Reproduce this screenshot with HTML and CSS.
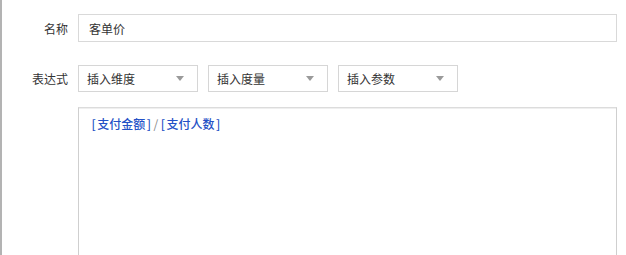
FILE: index.html
```html
<!DOCTYPE html>
<html lang="zh">
<head>
<meta charset="utf-8">
<link rel="stylesheet" href="styles.css">
</head>
<body>
<div class="page">
  <div class="row">
    <div class="label">名称</div>
    <div class="input">客单价</div>
  </div>
  <div class="row row-expr">
    <div class="label">表达式</div>
    <div class="selects">
      <div class="select"><span>插入维度</span><i class="caret"></i></div>
      <div class="select"><span>插入度量</span><i class="caret"></i></div>
      <div class="select"><span>插入参数</span><i class="caret"></i></div>
    </div>
  </div>
  <div class="row row-area">
    <div class="label"></div>
    <div class="area"><span class="tk"><span class="br">[</span>支付金额<span class="br">]</span></span><span class="op">/</span><span class="tk"><span class="br">[</span>支付人数<span class="br">]</span></span></div>
  </div>
</div>
</body>
</html>
```

FILE: styles.css
```css
html, body {
  margin: 0;
  padding: 0;
  background: #fff;
}
body {
  font-family: "Noto Sans CJK SC", "Noto Sans", sans-serif;
  font-size: 12px;
  color: #333;
}
.page {
  border-left: 2px solid #b3b3b3;
  height: 255px;
  box-sizing: border-box;
  padding-top: 14px;
  overflow: hidden;
}
.row {
  display: flex;
  align-items: center;
}
.label {
  width: 66px;
  margin-right: 10px;
  text-align: right;
  color: #333;
  flex: none;
}
.input {
  width: 539px;
  height: 28px;
  box-sizing: border-box;
  border: 1px solid #d9d9d9;
  padding: 0 10px;
  display: flex;
  align-items: center;
}
.row-expr {
  margin-top: 23px;
}
.selects {
  display: flex;
  gap: 10px;
}
.select {
  width: 120px;
  height: 27px;
  box-sizing: border-box;
  border: 1px solid #d6d6d6;
  padding: 0 13px 0 8px;
  display: flex;
  align-items: center;
  justify-content: space-between;
}
.caret {
  width: 0;
  height: 0;
  border-left: 4.5px solid transparent;
  border-right: 4.5px solid transparent;
  border-top: 5px solid #9a9a9a;
  margin-top: -1px;
}
.row-area {
  margin-top: 15px;
  align-items: flex-start;
}
.area {
  width: 539px;
  height: 170px;
  box-sizing: border-box;
  border: 1px solid #cfcfcf;
  border-top-color: #dcdcdc;
  box-shadow: inset 0 1px 0 #efefef;
  padding: 7px 11px;
  line-height: 18px;
}
.tk {
  color: #2451c6;
  font-weight: 500;
}
.br {
  margin: 0 1.5px;
}
.op {
  color: #888;
  margin: 0 1px;
}
```
